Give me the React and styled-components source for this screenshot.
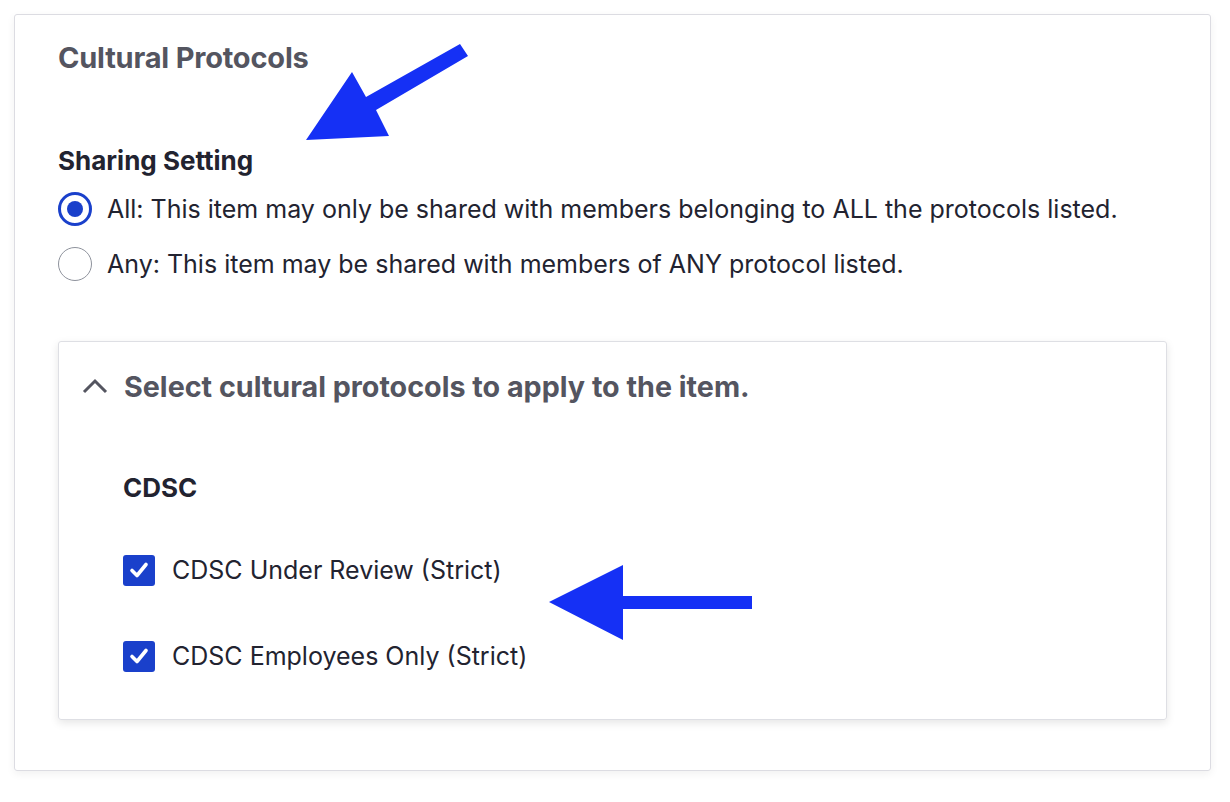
import React from "react";
import styled, { createGlobalStyle } from "styled-components";

const Global = createGlobalStyle`
  html, body { margin: 0; padding: 0; background: #ffffff; }
  body { font-family: Inter, "Noto Sans", "Liberation Sans", sans-serif; color: #222330; }
  * { box-sizing: border-box; }
`;

const Page = styled.div`
  position: relative;
  width: 1230px;
  height: 802px;
  padding: 14px 19px 0 14px;
`;

const Card = styled.section`
  height: 757px;
  border: 1px solid #dcdce2;
  border-radius: 3px;
  box-shadow: 0 3px 8px rgba(0, 0, 0, 0.06);
  padding: 25px 43px 0 43px;
  display: flex;
  flex-direction: column;
`;

const Title = styled.h2`
  margin: 0;
  font-size: 29px;
  line-height: 36px;
  font-weight: 700;
  color: #545560;
  letter-spacing: -0.2px;
`;

const Fieldset = styled.fieldset`
  margin: 0;
  padding: 0;
  border: 0;
  margin-top: 70px;
  display: flex;
  flex-direction: column;
`;

const Legend = styled.div`
  font-size: 26px;
  line-height: 30px;
  font-weight: 700;
  color: #222330;
  margin-bottom: 5px;
`;

const OptionRow = styled.label`
  display: flex;
  align-items: center;
  gap: 15px;
  height: 55px;
  font-size: 25px;
  color: #222330;
`;

const Radio = styled.span`
  flex: none;
  width: 34px;
  height: 34px;
  border-radius: 50%;
  border: ${(p) => (p.$checked ? "3px solid #1a40cb" : "1.5px solid #8e929c")};
  background: #fff;
  display: flex;
  align-items: center;
  justify-content: center;
  &::after {
    content: "";
    display: ${(p) => (p.$checked ? "block" : "none")};
    width: 16px;
    height: 16px;
    border-radius: 50%;
    background: #1a40cb;
  }
`;

const Panel = styled.div`
  margin-top: 50px;
  height: 379px;
  border: 1px solid #dedfe4;
  border-radius: 3px;
  box-shadow: 0 3px 8px rgba(0, 0, 0, 0.1);
  display: flex;
  flex-direction: column;
`;

const Summary = styled.div`
  display: flex;
  align-items: center;
  gap: 16px;
  padding: 10px 0 0 23px;
  height: 78px;
  font-size: 28.7px;
  font-weight: 700;
  color: #545560;
`;

const PanelBody = styled.div`
  padding: 0 0 0 64px;
  display: flex;
  flex-direction: column;
`;

const GroupTitle = styled.div`
  margin-top: 53px;
  font-size: 26px;
  line-height: 30px;
  font-weight: 700;
  color: #222330;
`;

const CheckRow = styled.label`
  display: flex;
  align-items: center;
  gap: 17px;
  height: 86px;
  font-size: 25px;
  color: #222330;
`;

const CheckList = styled.div`
  margin-top: 24px;
  display: flex;
  flex-direction: column;
`;

const Box = styled.span`
  flex: none;
  width: 32px;
  height: 31px;
  border-radius: 3px;
  background: #1a40cb;
  display: flex;
  align-items: center;
  justify-content: center;
`;

const Overlay = styled.svg`
  position: absolute;
  left: 0;
  top: 0;
  pointer-events: none;
`;

const Check = () => (
  <svg width="20" height="18" viewBox="0 0 20 18">
    <path d="M3 9.5 L8 14.5 L17 3.5" fill="none" stroke="#fff" strokeWidth="3.6" strokeLinecap="round" strokeLinejoin="round" />
  </svg>
);

const Chevron = () => (
  <svg width="26" height="16" viewBox="0 0 26 16">
    <path d="M2 14 L13 3 L24 14" fill="none" stroke="#545560" strokeWidth="3" />
  </svg>
);

export default function App() {
  return (
    <Page>
      <Global />
      <Card>
        <Title>Cultural Protocols</Title>
        <Fieldset>
          <Legend>Sharing Setting</Legend>
          <OptionRow>
            <Radio $checked />
            All: This item may only be shared with members belonging to ALL the protocols listed.
          </OptionRow>
          <OptionRow>
            <Radio />
            Any: This item may be shared with members of ANY protocol listed.
          </OptionRow>
        </Fieldset>
        <Panel>
          <Summary>
            <Chevron />
            Select cultural protocols to apply to the item.
          </Summary>
          <PanelBody>
            <GroupTitle>CDSC</GroupTitle>
            <CheckList>
              <CheckRow>
                <Box><Check /></Box>
                CDSC Under Review (Strict)
              </CheckRow>
              <CheckRow>
                <Box><Check /></Box>
                CDSC Employees Only (Strict)
              </CheckRow>
            </CheckList>
          </PanelBody>
        </Panel>
      </Card>
      <Overlay width="1230" height="802" viewBox="0 0 1230 802">
        <polygon points="460,44 468,56 376,110 389,136 306,140 352,72 366,97" fill="#1530f5" />
        <polygon points="549,602 623,565 623,596 752,596 752,609 623,609 623,640" fill="#1530f5" />
      </Overlay>
    </Page>
  );
}
